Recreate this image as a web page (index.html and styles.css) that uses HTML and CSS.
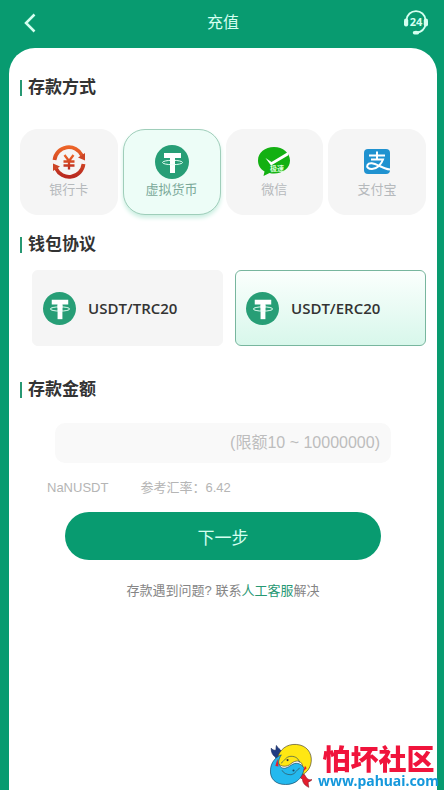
FILE: index.html
```html
<!DOCTYPE html>
<html lang="zh-CN">
<head>
<meta charset="utf-8">
<meta name="viewport" content="width=device-width, initial-scale=1">
<title>充值</title>
<link rel="stylesheet" href="styles.css">
</head>
<body>
<svg class="defs" aria-hidden="true">
  <symbol id="tether" viewBox="0 0 34 34">
    <circle cx="17" cy="17" r="17" fill="#279e76"/>
    <path d="M9 8h17v5h-6v4h-5v-4H9z" fill="#fff"/>
    <path d="M15 18h5v10h-5z" fill="#fff"/>
    <ellipse cx="17.5" cy="17.5" rx="10" ry="2.2" fill="none" stroke="#e6fff5" stroke-width="1"/>
    <path d="M15 13h5v6h-5z" fill="#fff"/>
  </symbol>
</svg>
<header class="topbar">
  <button class="icon-button" type="button" aria-label="返回">
    <svg width="12" height="20" viewBox="0 0 12 20"><path d="M10.500 1.500 2 10l8.500 8.500" fill="none" stroke="#d5fff0" stroke-width="2.500"/></svg>
  </button>
  <h1>充值</h1>
  <button class="icon-button" type="button" aria-label="24小时客服">
    <svg width="24" height="26" viewBox="0 0 24 26">
      <path d="M2.500 10C3 4.500 7 1.200 12 1.200S21 4.500 21.500 10M21.500 15c-1 4-4 6.800-8 7.500" fill="none" stroke="#d5fff0" stroke-width="1.800"/>
      <rect x="0" y="8.500" width="4.200" height="8" rx="2" fill="#d5fff0"/>
      <rect x="19.800" y="8.500" width="4.200" height="8" rx="2" fill="#d5fff0"/>
      <ellipse cx="12" cy="22.700" rx="3.200" ry="1.900" fill="#d5fff0"/>
      <text class="badge-24" x="12" y="16" text-anchor="middle">24</text>
    </svg>
  </button>
</header>
<main class="panel">
  <h2 class="section-title">存款方式</h2>
  <div class="methods">
    <button class="method" type="button">
      <svg width="34" height="34" viewBox="0 0 34 34">
        <defs><linearGradient id="ember" x2="0" y2="1"><stop stop-color="#ec6428"/><stop offset="1" stop-color="#b82920"/></linearGradient></defs>
        <g fill="none" stroke="url(#ember)">
          <path d="M2.500 15A14.500 14.500 0 0 1 30 10.500M31.500 19A14.500 14.500 0 0 1 4 23.500" stroke-width="3.800"/>
          <path d="m12.500 10 4.500 6 4.500-6M11.500 16.500h11M11.500 20.500h11M17 16v8.500" stroke-width="2.300"/>
        </g>
        <path d="m33 8v7.500l-7-3zM1 26v-7.500l7 3z" fill="#cd4525"/>
      </svg>
      <span>银行卡</span>
    </button>
    <button class="method is-active" type="button" aria-pressed="true">
      <svg width="34" height="34"><use href="#tether"/></svg>
      <span>虚拟货币</span>
    </button>
    <button class="method" type="button">
      <svg width="34" height="34" viewBox="0 0 34 34">
        <path d="M17 2C8 2 1 7.500 1 15.500c0 5 2.500 8.500 6.500 11L6.500 31l6-3c1.500.5 3 .5 4.500.5 9 0 16-5.500 16-13S26 2 17 2z" fill="#13b012"/>
        <path d="m8.500 13 6 4L31 7v3.500L14 20.500z" fill="#fff"/>
        <text class="badge-fast" x="13" y="26">极速</text>
      </svg>
      <span>微信</span>
    </button>
    <button class="method" type="button">
      <svg width="34" height="34" viewBox="0 0 34 34">
        <rect x="4" y="4" width="26" height="25" rx="4" fill="#2092d0"/>
        <path d="M9 10.500h16M17 6.500V14M11 14.500h12c-1.500 4.500-6 9.500-11 9.500-4 0-5.500-2-4.500-4 1.500-3 6.500-2 11 .5 4 2 7 3.500 11.500 4" fill="none" stroke="#fff" stroke-width="2"/>
      </svg>
      <span>支付宝</span>
    </button>
  </div>
  <h2 class="section-title">钱包协议</h2>
  <div class="wallets">
    <button class="wallet" type="button">
      <svg width="33" height="33"><use href="#tether"/></svg>
      <span>USDT/TRC20</span>
    </button>
    <button class="wallet is-active" type="button" aria-pressed="true">
      <svg width="33" height="33"><use href="#tether"/></svg>
      <span>USDT/ERC20</span>
    </button>
  </div>
  <h2 class="section-title"><label for="amount">存款金额</label></h2>
  <input class="amount" id="amount" type="text" inputmode="decimal" placeholder="(限额10 ~ 10000000)">
  <div class="rate"><span>NaNUSDT</span><span>参考汇率：6.42</span></div>
  <button class="next" type="button">下一步</button>
  <p class="help">存款遇到问题? 联系<a href="#service">人工客服</a>解决</p>
</main>
<aside class="community">
  <svg width="46" height="46" viewBox="0 0 132 132" aria-hidden="true">
    <g stroke-width="2" stroke-linejoin="round">
      <path d="M42 27C37 20 31 18 27 10c-2 9 0 12-3 14-6 0-9-3-12-6 0 12 4 20 12 25l6 13z" fill="#1f3b83" stroke="#172b60"/>
      <path d="M102 89c8 4 8 13 15 17 4 3 8 3 12 2-4 5-9 5-11 8 0 6 1 9 2 14-11-5-18-13-18-23l-8-6z" fill="#e51d2d" stroke="#8b2030"/>
      <path d="M29 51C34 21 58 5 84 7c30 2 45 24 43 48-2 24-18 39-37 42 12-11 16-24 9-36-8-11-22-6-31 2-10 9-28 9-37-2z" fill="#ffe713" stroke="#504925"/>
      <path d="M107 75c-6 32-26 47-54 47-29 0-45-17-43-42 1-20 13-36 31-43-9 14-10 25-3 33 9 11 22 3 32-4 12-8 25-7 37 9z" fill="#24b9ee" stroke="#164a66"/>
      <path d="M40 61c9-5 14-20 29-20 14 0 23 8 24 18M94 75c-7 1-12 18-25 19-13 0-22-5-26-13" fill="none" stroke="#34515a"/>
      <path d="M30 48 24 69l9 1zM104 85l10-10-5-7z" fill="#e51d2d"/>
    </g>
    <circle cx="59" cy="52" r="3" fill="#333"/><circle cx="76" cy="82" r="3" fill="#174866"/>
  </svg>
  <div class="community-name"><strong>怕坏社区</strong><span>www.pahuai.com</span></div>
</aside>
</body>
</html>
```
FILE: styles.css
```css
* { box-sizing: border-box; }

body {
  margin: 0;
  min-height: 100vh;
  display: flex;
  flex-direction: column;
  background: #089b70;
  color: #333;
  font-family: "Liberation Sans", "Noto Sans CJK SC", sans-serif;
}

button, input { font: inherit; border: 0; }
button { cursor: pointer; padding: 0; }
h1, h2, p { margin: 0; }
.defs { position: absolute; width: 0; height: 0; }

.topbar {
  display: flex;
  align-items: center;
  justify-content: space-between;
  height: 48px;
  padding: 0 16px 2px 18px;
}
.topbar h1 {
  color: #d5fff0;
  font-size: 16px;
  font-weight: 400;
  line-height: 24px;
}
.icon-button {
  display: grid;
  place-items: center;
  width: 24px;
  height: 32px;
  background: none;
}
.badge-24 { font: 700 11px "Open Sans", sans-serif; fill: #d5fff0; }
.badge-fast { font: 700 7px "Noto Sans CJK SC", sans-serif; fill: #d9ffd9; }

.panel {
  flex: 1;
  display: flex;
  flex-direction: column;
  margin: 0 7px 0 9px;
  padding: 28px 11px 40px;
  border-radius: 26px 26px 0 0;
  background: #fff;
}

.section-title {
  display: flex;
  align-items: center;
  gap: 6px;
  font-size: 17px;
  font-weight: 700;
  line-height: 24px;
}
.section-title::before {
  content: "";
  width: 2px;
  height: 16px;
  background: #279873;
}

.methods {
  display: grid;
  grid-template-columns: repeat(4, 1fr);
  gap: 5px;
  margin: 29px 0 18px;
}
.method {
  display: flex;
  flex-direction: column;
  align-items: center;
  gap: 1px;
  height: 86px;
  padding-top: 15px;
  border: 1px solid #f5f5f5;
  border-radius: 18px;
  background: #f5f5f5;
  color: #b5b9bc;
  font-size: 13px;
  line-height: 20px;
}
.method.is-active {
  border-color: #9fceba;
  border-radius: 22px;
  background: #edfdf7;
  color: #7ba999;
  box-shadow: 0 3px 4px #ccefe2;
}

.wallets {
  display: grid;
  grid-template-columns: 1fr 1fr;
  gap: 12px;
  margin: 13px 0 32px 12px;
}
.wallet {
  display: flex;
  align-items: center;
  gap: 12px;
  height: 76px;
  padding: 0 10px;
  border: 1px solid #f5f5f5;
  border-radius: 6px;
  background: #f5f5f5;
  color: #333;
  font: 600 15px/20px "Open Sans", sans-serif;
}
.wallet.is-active {
  border-color: #78b69e;
  background: linear-gradient(#fbfffd, #d8f7eb);
}

.amount {
  height: 40px;
  margin: 21px 35px 15px;
  padding: 0 11px;
  min-width: 0;
  border-radius: 10px;
  background: #f9f9f9;
  color: #333;
  font-size: 16px;
  text-align: right;
}
.amount::placeholder { color: #bdbdbd; opacity: 1; }

.rate {
  display: flex;
  gap: 32px;
  padding-left: 27px;
  color: #b5b5b5;
  font-size: 13px;
  line-height: 20px;
}
.next {
  height: 48px;
  margin: 14px 45px 21px;
  border-radius: 24px;
  background: #089b70;
  color: #d5fff0;
  font-size: 17px;
}
.help {
  color: #858585;
  font-size: 13px;
  line-height: 20px;
  text-align: center;
}
.help a { color: #279873; text-decoration: none; }

.community {
  position: fixed;
  right: 5px;
  bottom: 2px;
  display: flex;
  align-items: center;
  gap: 5px;
}
.community-name {
  display: flex;
  flex-direction: column;
  align-items: center;
  white-space: nowrap;
}
.community-name strong {
  color: #f0143c;
  font: 900 28px/32px "Noto Sans CJK SC", sans-serif;
}
.community-name span {
  color: #1598dc;
  font: 700 14px/14px "Noto Sans", sans-serif;
}
```
